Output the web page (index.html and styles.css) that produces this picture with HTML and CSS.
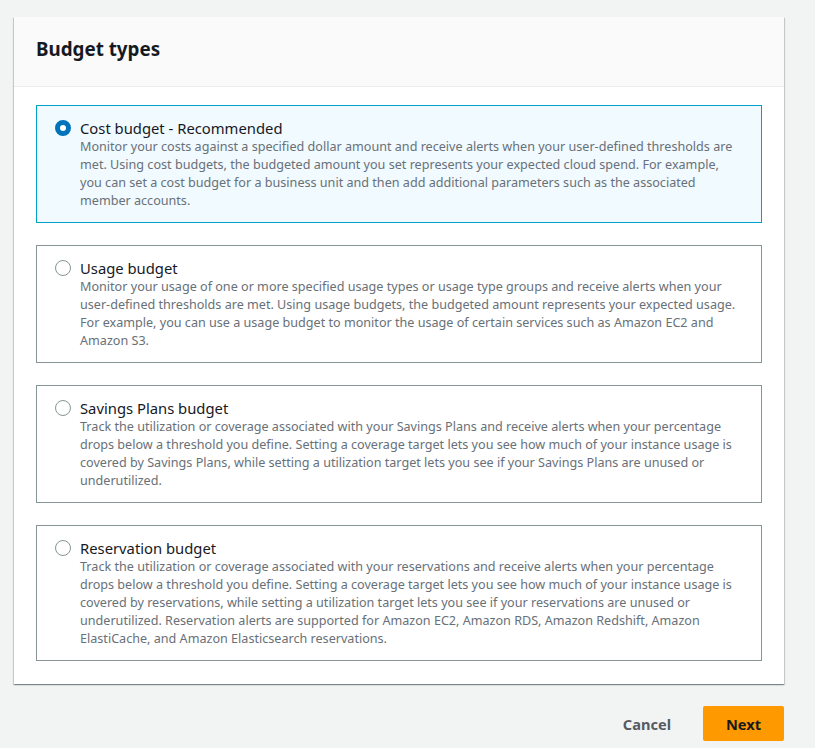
FILE: index.html
```html
<!DOCTYPE html>
<html lang="en">
<head>
    <meta charset="UTF-8">
    <meta name="viewport" content="width=device-width, initial-scale=1.0">
    <title>Budget types</title>
    <link rel="stylesheet" href="styles.css">
</head>
<body>
    <div class="page">
        <div class="card">
            <div class="card-header">
                <h2>Budget types</h2>
            </div>
            <div class="card-body">
                <label class="tile selected">
                    <span class="radio checked"></span>
                    <span class="tile-text">
                        <span class="tile-title">Cost budget - Recommended</span>
                        <span class="tile-desc">Monitor your costs against a specified dollar amount and receive alerts when your user-defined thresholds are met. Using cost budgets, the budgeted amount you set represents your expected cloud spend. For example, you can set a cost budget for a business unit and then add additional parameters such as the associated member accounts.</span>
                    </span>
                </label>
                <label class="tile">
                    <span class="radio"></span>
                    <span class="tile-text">
                        <span class="tile-title">Usage budget</span>
                        <span class="tile-desc">Monitor your usage of one or more specified usage types or usage type groups and receive alerts when your user-defined thresholds are met. Using usage budgets, the budgeted amount represents your expected usage. For example, you can use a usage budget to monitor the usage of certain services such as Amazon EC2 and Amazon S3.</span>
                    </span>
                </label>
                <label class="tile">
                    <span class="radio"></span>
                    <span class="tile-text">
                        <span class="tile-title">Savings Plans budget</span>
                        <span class="tile-desc">Track the utilization or coverage associated with your Savings Plans and receive alerts when your percentage drops below a threshold you define. Setting a coverage target lets you see how much of your instance usage is covered by Savings Plans, while setting a utilization target lets you see if your Savings Plans are unused or underutilized.</span>
                    </span>
                </label>
                <label class="tile">
                    <span class="radio"></span>
                    <span class="tile-text">
                        <span class="tile-title">Reservation budget</span>
                        <span class="tile-desc">Track the utilization or coverage associated with your reservations and receive alerts when your percentage drops below a threshold you define. Setting a coverage target lets you see how much of your instance usage is covered by reservations, while setting a utilization target lets you see if your reservations are unused or underutilized. Reservation alerts are supported for Amazon EC2, Amazon RDS, Amazon Redshift, Amazon ElastiCache, and Amazon Elasticsearch reservations.</span>
                    </span>
                </label>
            </div>
        </div>
        <div class="actions">
            <button class="btn btn-link">Cancel</button>
            <button class="btn btn-primary">Next</button>
        </div>
    </div>
</body>
</html>
```

FILE: styles.css
```css
body {
    font-family: "Noto Sans", "Open Sans", Arial, sans-serif;
    color: #16191f;
    background-color: #f2f3f3;
    margin: 0;
    padding: 0;
}
.page {
    padding: 17px 31px 0 14px;
}
.card {
    background-color: #fff;
    box-shadow: 0 1px 1px 0 rgba(0, 28, 36, 0.3), 1px 1px 1px 0 rgba(0, 28, 36, 0.15), -1px 1px 1px 0 rgba(0, 28, 36, 0.15);
}
.card-header {
    background-color: #fafafa;
    border-bottom: 1px solid #eaeded;
    height: 69px;
    padding: 0 22px;
    display: flex;
    align-items: center;
}
.card-header h2 {
    margin: 0;
    font-size: 18.8px;
    font-weight: 700;
    padding-bottom: 6px;
}
.card-body {
    padding: 18px 22px 23px;
    display: flex;
    flex-direction: column;
    gap: 22px;
}
.tile {
    display: flex;
    gap: 9px;
    border: 1px solid #879596;
    padding: 12px 18px 12px 18px;
    cursor: pointer;
}
.tile.selected {
    border-color: #00a1c9;
    background-color: #f1faff;
}
.radio {
    flex: none;
    width: 14px;
    height: 14px;
    margin-top: 2px;
    border: 1px solid #879596;
    border-radius: 50%;
    background-color: #fff;
    box-sizing: content-box;
}
.radio.checked {
    width: 6px;
    height: 6px;
    border: 5px solid #0073bb;
}
.tile-text {
    display: flex;
    flex-direction: column;
}
.tile-title {
    font-size: 14.8px;
    line-height: 20px;
}
.tile-desc {
    font-size: 12.6px;
    line-height: 18px;
    color: #687078;
}
.actions {
    display: flex;
    justify-content: flex-end;
    align-items: center;
    gap: 20px;
    margin-top: 22px;
}
.btn {
    font-family: inherit;
    font-size: 14.6px;
    font-weight: 700;
    border: none;
    cursor: pointer;
    height: 35px;
    border-radius: 2px;
    padding: 0 20px;
}
.btn-link {
    background: none;
    color: #545b64;
    padding: 0 12px;
}
.btn-primary {
    background-color: #ff9900;
    color: #16191f;
    min-width: 81px;
}
```
